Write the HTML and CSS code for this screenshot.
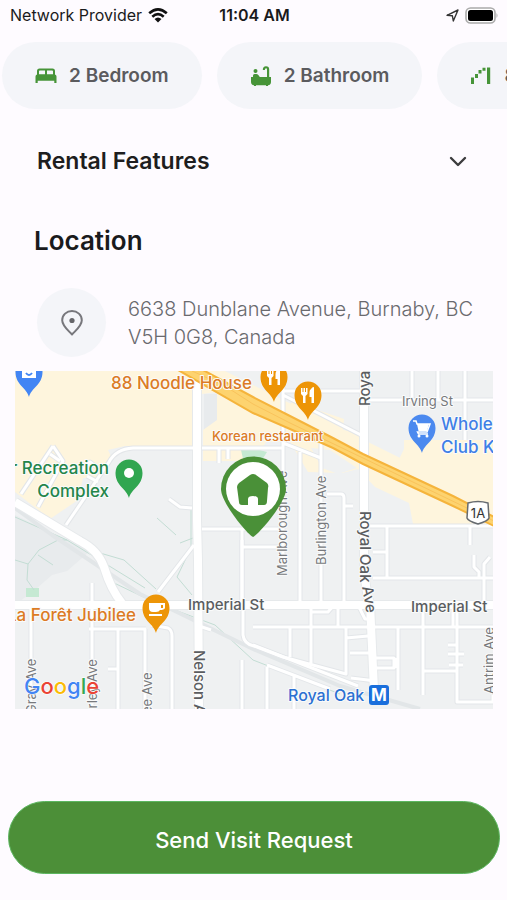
FILE: index.html
```html
<!DOCTYPE html>
<html lang="en">
<head>
<meta charset="utf-8">
<meta name="viewport" content="width=device-width, initial-scale=1">
<title>Rental location</title>
<link rel="stylesheet" href="styles.css">
</head>
<body>
<div class="screen">
  <header class="status">
    <div class="carrier">
      <span>Network Provider</span>
      <svg width="20" height="15" viewBox="0 0 20 15" fill="none" stroke="#111" stroke-width="2.6"><path d="M1.2 5.3Q10-2.5 18.8 5.3M4.3 8.7Q10 3.6 15.7 8.7"/><path d="M6.5 11Q10 8 13.5 11L10 14.5Z" fill="#111" stroke="none"/></svg>
    </div>
    <time class="clock">11:04 AM</time>
    <div class="indicators">
      <svg width="13" height="13" viewBox="0 0 13 13" fill="none" stroke="#333" stroke-width="1.4" stroke-linejoin="round"><path d="M1 6.3 12 1 7.3 12 6.4 6.8Z"/></svg>
      <svg width="34" height="17" viewBox="0 0 34 17"><rect x="1" y="1" width="29" height="15" rx="4.5" fill="#fff" stroke="#aaa" stroke-width="1.6"/><rect x="3" y="3" width="25" height="11" rx="2.5" fill="#000"/><path d="M31.5 6q2 2.500 0 5z" fill="#aaa"/></svg>
    </div>
  </header>

  <ul class="chips">
    <li class="chip">
      <svg width="22" height="22" viewBox="0 0 22 22" fill="#469438"><path d="M2 9.500V6q0-2.500 2.500-2.500h13Q20 3.500 20 6v3.500q1.500.5 1.500 2V18h-2.200v-2.200H2.700V18H.5v-6.500q0-1.500 1.500-2Zm2-.3h6V5.500H4.800Q4 5.500 4 6.300Zm8 0h6V6.300q0-.8-.8-.8H12Z"/></svg>
      <span>2 Bedroom</span>
    </li>
    <li class="chip">
      <svg width="22" height="22" viewBox="0 0 22 22" fill="#469438"><circle cx="5.500" cy="6" r="2"/><path d="M1 12h2v-1.500Q3 9 4.500 9h1.800q1.200 0 2 1l1.500 2H17V4.500q0-1.200-1-1.200t-1.200 1.700h-2Q12.800 1.300 16 1.300T19.200 4.500V12H21v5q0 3-3 3.200V21h-2v-.7H6V21H4v-.8Q1 20 1 17Z"/></svg>
      <span>2 Bathroom</span>
    </li>
    <li class="chip">
      <svg width="22" height="22" viewBox="0 0 22 22" fill="#469438"><path d="M1 12.500h3V19H1zM5 9h3v4H5zM8.500 5h3v3.500h-3zM12.500 2.800h3v3h-3zM17 2.500h3.200V19H17z"/></svg>
      <span>850 sqft</span>
    </li>
  </ul>

  <main>
    <button class="accordion" type="button" aria-expanded="false">
      <span>Rental Features</span>
      <svg width="18" height="12" viewBox="0 0 18 12" fill="none" stroke="#3c3c3e" stroke-width="2.400" stroke-linecap="round" stroke-linejoin="round"><path d="m2 3 7 7 7-7"/></svg>
    </button>

    <h2 class="heading">Location</h2>

    <div class="address">
      <span class="pin">
        <svg width="24" height="28" viewBox="0 0 24 28" fill="none" stroke="#77777c" stroke-width="2"><path d="M12 25.500C9 22 2.200 17 2.200 11.200A9.800 9.300 0 0 1 21.800 11.200C21.800 17 15 22 12 25.500Z" stroke-linejoin="round"/><circle cx="12" cy="11.500" r="2.600" fill="#66666a" stroke="none"/></svg>
      </span>
      <address>6638 Dunblane Avenue, Burnaby, BC V5H 0G8, Canada</address>
    </div>

    <svg class="map" viewBox="15 371 478 338" role="img" aria-label="Map of the area around Royal Oak and Imperial St">
      <defs>
        <g id="minor">
          <path d="M202 448H282M228 448V459M219 448V463M202 529H283M242 529V605M283 371V575M283 395 361 435M283 393V391H361M283 443 321 458M321 443V601M300 452V601M327 494H341Q344 494 344 498V601M344 506H353"/>
          <path d="M193 448H133Q116 449 109 462L66 525M103 472 90 462 80 473M53 446 21 494M53 446 63 461 38 507M50 454 60 461M169 499 180 507 192 508M98 482 87 476"/>
          <path d="M365 400H493M412 371V400M438 371V400M465 371V440M368 526H493M387 526V578M470 526V545M373 578H493M373 552H387V578M474 555V567L479 572V578M490 557 484 564V605"/>
          <path d="M92 583V709M31 608V709M89 629H146M118 629V709M108 669H118M145 629V709M151 625 168 628Q172 630 172 636V709"/>
          <path d="M194 545 158 592M199 626 211 630M242 540V605M242 547H283M243 605V635Q244 644 254 646L283 657 346 674V628M253 627H493M311 605V664M290 628V657M312 612H328L334 605M338 605V627M358 605 365 619H371M346 638 368 636M350 653H370M351 678 376 681M376 658H394V668H376M396 668V658M398 628V690M423 605V695M453 605V627M457 605V702H493V695M424 671H457M448 645H457V654H449M449 665H463M448 654H464"/>
          <path d="M242 660V709M267 665 330 689M267 667V709M294 676V709M253 645 358 686"/>
        </g>
        <g id="major">
          <path d="M197 371V520L198 560 199 709"/>
          <path d="M364 371V560Q365 590 370 604L374 690"/>
          <path d="M15 605H493"/>
          <path d="M15 502 80 541Q98 550 104 567 111 590 122 603"/>
        </g>
        <path id="drop" d="M0 20C-2 11-13.500 8-13.500-5A13.500 13.500 0 0 1 13.500-5C13.500 8 2 11 0 20Z"/>
      </defs>

      <rect x="15" y="371" width="478" height="338" fill="#eff1f2"/>
      <path fill="#e8ebed" d="M15 515 90 551 67 571 52 575 37 588 15 605ZM204 394H217V422L204 430ZM193 404 180 421 193 428Z"/>
      <g fill="#fef5dd">
        <path d="M15 371H193V446H125L108 450 113 460 99 478 83 478 78 500 50 519 15 492Z"/>
        <path d="M202 371H225L493 504V524H413L409 503 375 487 358 469 342 473 308 472 290 442H266L254 461H203V430L217 420V392L202 394Z"/>
        <path d="M292 402 312 408 344 419 343 430 359 433V448L376 447 389 454 398 461 404 449 404 440H493V516L361 454 282 415Z"/>
      </g>
      <path fill="#eff1f2" d="M311 448 330 450 357 468 338 474 322 468ZM202 461H283V510H202Z"/>
      <path fill="#c5e9d3" d="M26 588H39V597H26ZM241 450 248 447 267 452 260 463H244Z"/>
      <path class="path" d="M15 517 67 540 145 588M15 560 28 564 39 550 58 540 67 540M53 565 38 555M28 564 27 580 34 590M100 553 124 560 156 589M112 582 156 603 215 625 253 660 340 694M157 518 176 535M191 509V548L177 577 192 595M180 543 193 538"/>
      <path class="rail" d="M15 508 52 535 140 594 253 649 340 686 420 709"/>

      <use href="#minor" class="minor-edge"/>
      <use href="#major" class="major-edge"/>
      <use href="#minor" class="minor-fill"/>
      <use href="#major" class="major-fill"/>

      <path fill="#fdd36f" stroke="#f5b43c" stroke-width="2" d="M178 370 253 413 290 429 333 448 363 464 453 506 494 526V517L453 496 363 454 333 438 290 416 253 397 203 370Z"/>
      <path fill="none" stroke="#f9c35c" d="M192 371 225 386 253 404 290 423 363 458 494 521"/>

      <g class="vertical">
        <text transform="translate(287 576) rotate(-90)">Marlborough Ave</text>
        <text transform="translate(326 565) rotate(-90)">Burlington Ave</text>
        <text transform="translate(36 714) rotate(-90)">Gray Ave</text>
        <text transform="translate(97 716) rotate(-90)">erley Ave</text>
        <text transform="translate(152 714) rotate(-90)">ee Ave</text>
        <text transform="translate(494 694) rotate(-90)">Antrim Ave</text>
      </g>
      <g class="street">
        <text x="188" y="610">Imperial St</text>
        <text x="411" y="612">Imperial St</text>
        <text transform="translate(370 406) rotate(-90)">Royal</text>
        <text transform="translate(360 511) rotate(90)">Royal Oak</text>
        <text transform="translate(362 587) rotate(80)">Ave</text>
        <text transform="translate(194 650) rotate(90)">Nelson Ave</text>
      </g>
      <text class="vertical" x="402" y="406">Irving St</text>

      <g class="place food">
        <text x="111" y="389">88 Noodle House</text>
        <text x="136" y="621" text-anchor="end">La Forêt Jubilee</text>
        <text class="small" x="212" y="441">Korean restaurant</text>
      </g>
      <g class="place park">
        <text x="109" y="474" text-anchor="end">r Recreation</text>
        <text x="109" y="497" text-anchor="end">Complex</text>
      </g>
      <g class="place shop">
        <text x="441" y="430">Whole</text>
        <text x="441" y="453">Club K</text>
      </g>
      <text class="place transit" x="288" y="701">Royal Oak</text>

      <g transform="translate(29 377)"><use href="#drop" fill="#4285f4"/><path d="M-7-9H7V1H-7Z" fill="#fff"/><path d="M-3-4Q0 0 3-4" fill="none" stroke="#4285f4" stroke-width="2"/></g>
      <g transform="translate(129 478)"><use href="#drop" fill="#30a650"/><circle cy="-5" r="5" fill="#fff"/></g>
      <g transform="translate(274 382)"><use href="#drop" fill="#ed9507"/><path d="M-7-13H-5.500V-8H-4.500V-13H-3V-8H-2V-13H-.5V-6L-2.500-4V3H-5V-4L-7-6ZM3-12Q4-14 6-14V3H3.500V-3H1.500V-8Q1.500-10 3-12Z" fill="#fff"/></g>
      <g transform="translate(308 400)"><use href="#drop" fill="#ed9507"/><path d="M-7-12H-5.500V-8H-4.500V-12H-3V-8H-2V-12H-.5V-6L-2.500-4V3H-5V-4L-7-6ZM3-11Q4-13 6-13V3H3.500V-3H1.500V-8Q1.500-10 3-11Z" fill="#fff"/></g>
      <g transform="translate(422 433)"><use href="#drop" fill="#4b89ef"/><path d="M-9-12H-6L-5-9H8L5-1H-4.500L-3.500 1H6" fill="none" stroke="#fff" stroke-width="1.500"/><path d="M-5-9H7L5-2H-3.500Z" fill="#fff"/><circle cx="-3" cy="3" r="1.500" fill="#fff"/><circle cx="5" cy="3" r="1.500" fill="#fff"/></g>
      <g transform="translate(156 613)"><use href="#drop" fill="#ed9507"/><path d="M-7-10H9V-5Q8-3 4-3 3-1 0-1H-3Q-7-1-7-5ZM5-8V-5H7V-8ZM-7 1H6V3H-7Z" fill="#fff"/></g>

      <path d="M468 503Q478 500 488 503L489 518Q488 521 478 524 468 521 467 518Z" fill="#fff" stroke="#666b70" stroke-width="1.500"/>
      <text class="shield" x="478" y="518" text-anchor="middle">1A</text>

      <rect x="369" y="685" width="20" height="20" rx="3" fill="#1a6fdc"/>
      <text class="metro" x="379" y="701" text-anchor="middle">M</text>

      <path d="M253 537C248 535 221 503 221 489A32 32 0 0 1 286 489C286 503 258 535 253 537Z" fill="#4a9038"/>
      <circle cx="253" cy="489" r="27" fill="#fff"/>
      <path d="M250 475Q253 473 256 475L267 483Q269 485 268 488L267 501Q267 505 264 505H258V499Q258 496 253 496T248 499V505H242Q239 505 239 502L237 487Q237 485 239 483Z" fill="#4a9038"/>

      <text class="google" x="24" y="694"><tspan fill="#4285f4">G</tspan><tspan fill="#ea4335">o</tspan><tspan fill="#fbbc05">o</tspan><tspan fill="#4285f4">g</tspan><tspan fill="#34a853">l</tspan><tspan fill="#ea4335">e</tspan></text>
    </svg>
  </main>

  <footer class="actions">
    <button class="send" type="button">Send Visit Request</button>
  </footer>
</div>
</body>
</html>
```
FILE: styles.css
```css
* {
  box-sizing: border-box;
}

body {
  margin: 0;
  background: #fefbff;
  color: #1a1a1c;
  font-family: Inter, "Liberation Sans", sans-serif;
}

button {
  border: 0;
  font-family: inherit;
  cursor: pointer;
}

.screen {
  display: flex;
  flex-direction: column;
  min-height: 100vh;
  overflow: hidden;
}

.status {
  display: grid;
  grid-template-columns: 1fr auto 1fr;
  align-items: center;
  height: 30px;
  padding: 0 8px 0 10px;
  font-size: 16px;
}

.carrier {
  display: flex;
  align-items: center;
  gap: 6px;
  white-space: nowrap;
}

.clock {
  font-weight: 600;
}

.indicators {
  display: flex;
  align-items: center;
  justify-content: flex-end;
  gap: 6px;
}

.chips {
  display: flex;
  gap: 15px;
  margin: 12px 0 0;
  padding: 0 0 0 2px;
  overflow: hidden;
  list-style: none;
}

.chip {
  display: flex;
  flex: none;
  align-items: center;
  gap: 12px;
  height: 67px;
  padding: 0 33px;
  border-radius: 34px;
  background: #f4f5f9;
  color: #5b5b5e;
  font-size: 19px;
  font-weight: 600;
}

.accordion {
  display: flex;
  align-items: center;
  justify-content: space-between;
  width: 100%;
  height: 44px;
  margin-top: 30px;
  padding: 0 40px 0 37px;
  background: none;
  color: #1e1e20;
  font-size: 23px;
  font-weight: 600;
}

.heading {
  margin: 42px 34px 0;
  font-size: 26px;
  font-weight: 600;
  line-height: 32px;
}

.address {
  display: flex;
  align-items: center;
  gap: 22px;
  margin: 31px 28px 14px 37px;
}

.address address {
  flex: 1;
  color: #6a6a6e;
  font-size: 20px;
  font-style: normal;
  font-weight: 300;
  line-height: 28px;
}

.pin {
  display: flex;
  flex: none;
  align-items: center;
  justify-content: center;
  width: 69px;
  height: 69px;
  border-radius: 50%;
  background: #f4f5f9;
}

.map {
  display: block;
  width: calc(100% - 29px);
  margin: 0 14px 0 15px;
  font-family: Inter, sans-serif;
}

.minor-edge,
.major-edge,
.minor-fill,
.major-fill,
.path,
.rail {
  fill: none;
  stroke-linejoin: round;
}

.minor-edge {
  stroke: #e3e6e9;
  stroke-width: 5px;
}

.minor-fill {
  stroke: #fff;
  stroke-width: 3px;
}

.major-edge {
  stroke: #e6e9eb;
  stroke-width: 10px;
}

.major-fill {
  stroke: #fff;
  stroke-width: 8px;
}

.path {
  stroke: #c3ddd4;
  stroke-width: 1px;
}

.rail {
  stroke: #e2e6e8;
  stroke-width: 4px;
}

.vertical,
.street,
.place,
.shield {
  paint-order: stroke;
  stroke: #fafbfb;
  stroke-width: 2px;
  stroke-linejoin: round;
}

.vertical {
  fill: #77797c;
  font-size: 13px;
}

.street {
  fill: #5a5d60;
  font-size: 15px;
  font-weight: 500;
}

.place {
  font-size: 17px;
  font-weight: 500;
}

.place .small {
  font-size: 13px;
}

.food {
  fill: #dc7b25;
}

.park {
  fill: #24854a;
}

.shop {
  fill: #3f7fe6;
}

.transit {
  fill: #2c70d2;
  font-size: 16px;
}

.shield {
  fill: #333;
  font-size: 13px;
}

.metro {
  fill: #fff;
  font-size: 17px;
  font-weight: 700;
}

.google {
  paint-order: stroke;
  stroke: #fff;
  stroke-width: 1px;
  font-size: 22px;
  font-weight: 500;
}

.actions {
  margin-top: auto;
  padding: 26px 7px 26px 8px;
}

.send {
  display: block;
  width: 100%;
  height: 73px;
  padding: 4px 0 0;
  border: 1px solid #5cb660;
  border-radius: 37px;
  background: #4c8f38;
  color: #fff;
  font-size: 22px;
  font-weight: 500;
}
```
